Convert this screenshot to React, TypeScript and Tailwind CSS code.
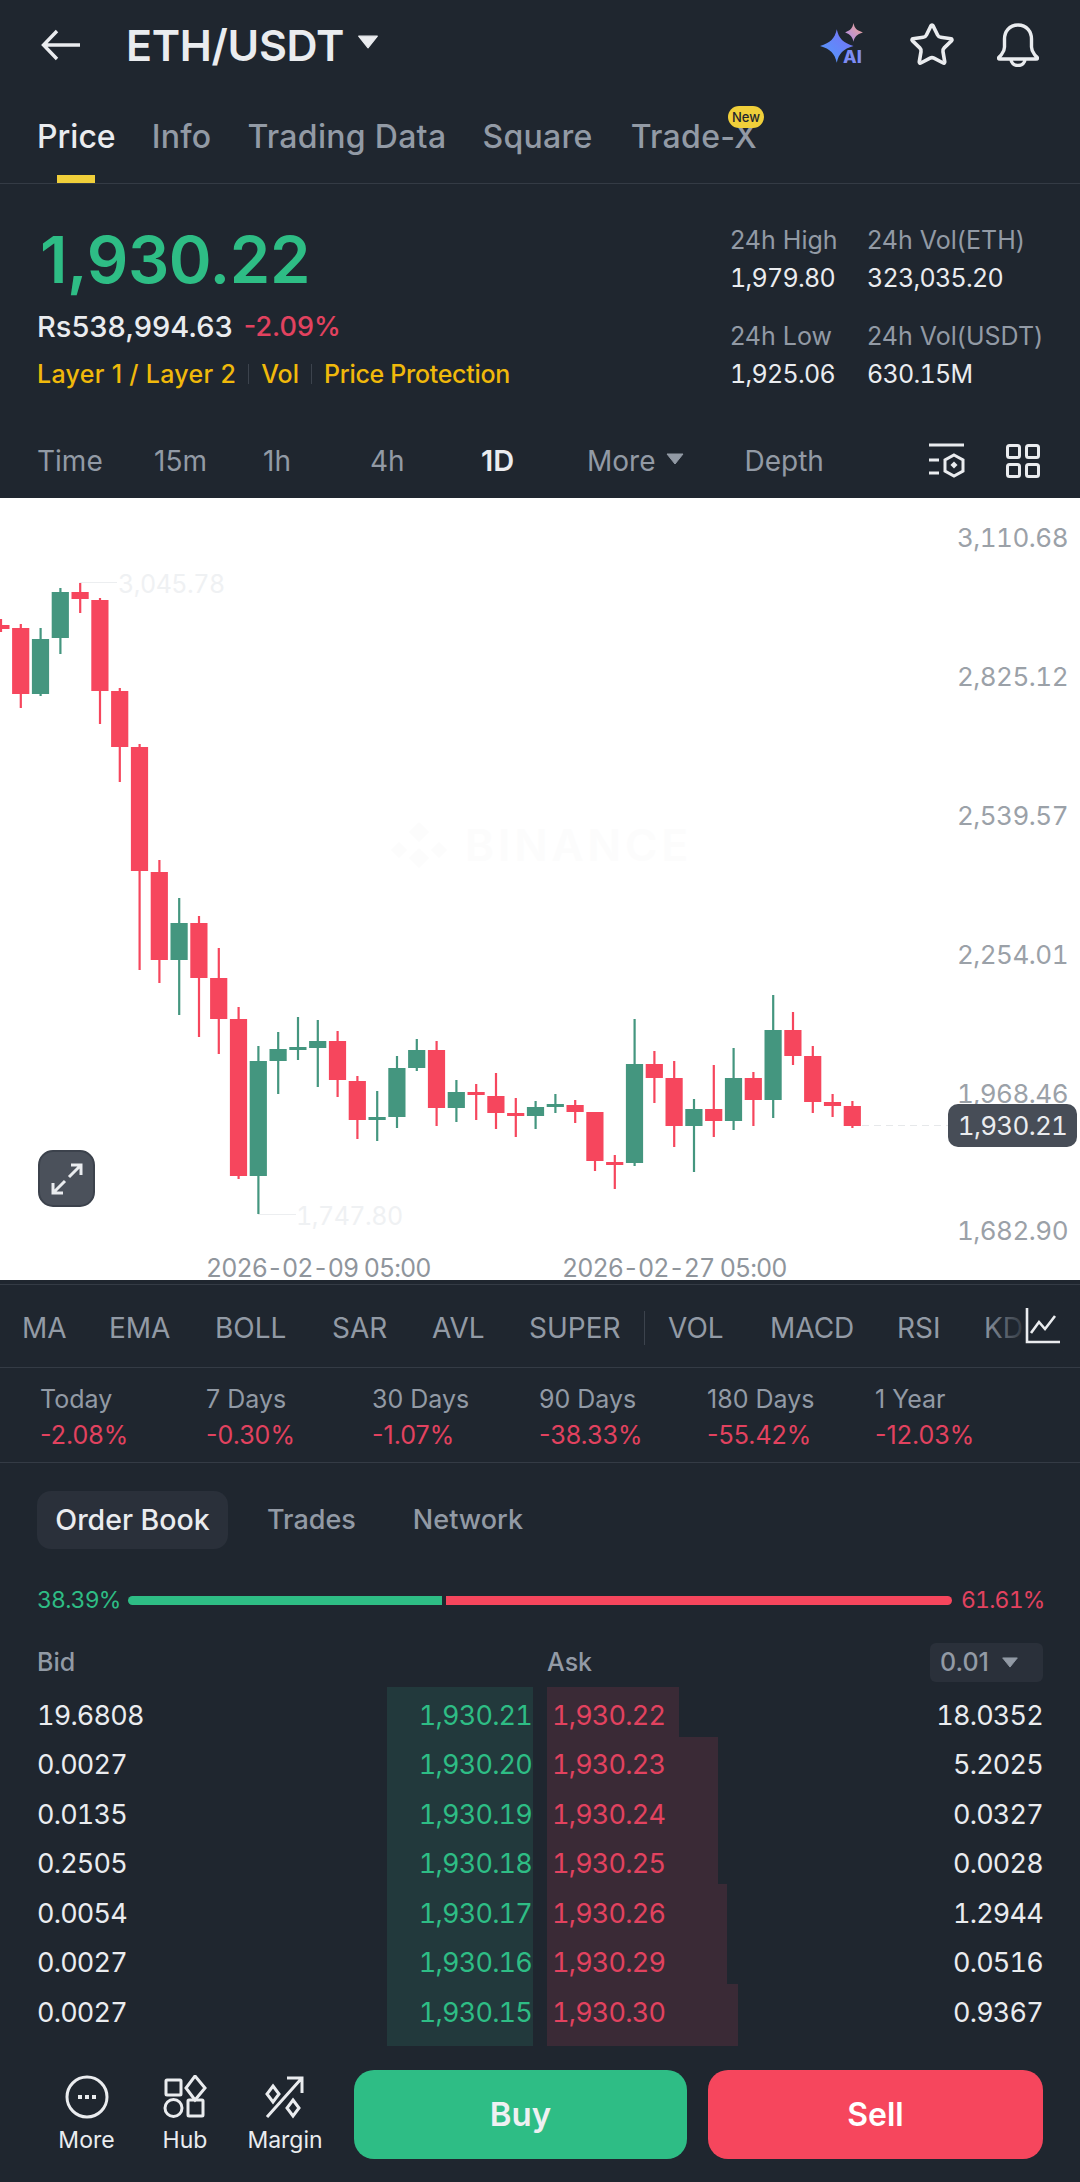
import { Star } from "lucide-react";

type Candle = [up: 0 | 1, wickTop: number, bodyTop: number, bodyBottom: number, wickBottom: number];

// page coordinates measured off the reference, oldest first
const candles: Candle[] = [
  [0, 619, 625, 629, 632], [0, 624, 628, 694, 708], [1, 628, 639, 694, 696], [1, 588, 592, 638, 654],
  [0, 583, 592, 599, 613], [0, 598, 600, 691, 724], [0, 688, 691, 747, 782], [0, 744, 747, 871, 970],
  [0, 860, 872, 960, 983], [1, 898, 923, 960, 1015], [0, 916, 923, 978, 1037], [0, 948, 978, 1019, 1054],
  [0, 1007, 1019, 1176, 1179], [1, 1046, 1061, 1176, 1214], [1, 1032, 1049, 1061, 1094], [1, 1017, 1047, 1049, 1060],
  [1, 1020, 1041, 1048, 1087], [0, 1031, 1041, 1080, 1097], [0, 1076, 1081, 1120, 1139], [1, 1091, 1117, 1120, 1141],
  [1, 1056, 1068, 1117, 1128], [1, 1039, 1050, 1068, 1071], [0, 1041, 1050, 1108, 1126], [1, 1080, 1092, 1108, 1122],
  [0, 1084, 1092, 1095, 1120], [0, 1073, 1096, 1113, 1129], [0, 1098, 1113, 1116, 1137], [1, 1101, 1107, 1116, 1129],
  [1, 1094, 1104, 1106, 1113], [0, 1100, 1105, 1112, 1123], [0, 1112, 1112, 1161, 1171], [0, 1155, 1162, 1163, 1189],
  [1, 1019, 1064, 1163, 1166], [0, 1051, 1064, 1078, 1103], [0, 1061, 1078, 1126, 1147], [1, 1099, 1109, 1126, 1172],
  [0, 1065, 1109, 1121, 1137], [1, 1048, 1078, 1121, 1130], [0, 1072, 1078, 1100, 1126], [1, 995, 1030, 1100, 1118],
  [0, 1012, 1030, 1056, 1065], [0, 1046, 1056, 1102, 1113], [0, 1094, 1102, 1106, 1117], [0, 1101, 1106, 1126, 1128],
];

const axisLabels: [string, number][] = [
  ["3,110.68", 537], ["2,825.12", 676], ["2,539.57", 815], ["2,254.01", 954], ["1,968.46", 1093], ["1,682.90", 1230],
];

const periods = [
  ["Today", "-2.08%", "w-[166px]"], ["7 Days", "-0.30%", "w-[166px]"], ["30 Days", "-1.07%", "w-[167px]"],
  ["90 Days", "-38.33%", "w-[168px]"], ["180 Days", "-55.42%", "w-[168px]"], ["1 Year", "-12.03%", "w-[150px]"],
];

const book = [
  ["19.6808", "1,930.21", "1,930.22", "18.0352"], ["0.0027", "1,930.20", "1,930.23", "5.2025"],
  ["0.0135", "1,930.19", "1,930.24", "0.0327"], ["0.2505", "1,930.18", "1,930.25", "0.0028"],
  ["0.0054", "1,930.17", "1,930.26", "1.2944"], ["0.0027", "1,930.16", "1,930.29", "0.0516"],
  ["0.0027", "1,930.15", "1,930.30", "0.9367"],
];

// ask depth steps: width, height
const askDepth = [[132, 50], [171, 147], [180, 100], [191, 62]];

function Caret({ className }: { className: string }) {
  return (
    <svg viewBox="0 0 18 12" className={className} fill="currentColor">
      <path d="M1 1h16L9 11z" strokeLinejoin="round" stroke="currentColor" />
    </svg>
  );
}

function AiIcon() {
  return (
    <svg viewBox="0 0 44 42" className="h-[44px] w-[46px]">
      <defs>
        <linearGradient id="big" x1="0" y1="1" x2="1" y2="0">
          <stop offset="0" stopColor="#4f9dfb" />
          <stop offset="1" stopColor="#7a6ef5" />
        </linearGradient>
        <linearGradient id="small" x1="0" y1="1" x2="1" y2="0">
          <stop offset="0" stopColor="#a98bf2" />
          <stop offset="1" stopColor="#f0a58c" />
        </linearGradient>
      </defs>
      <path d="M17 6c2 9 6 13 16 16-10 3-14 7-16 16C15 29 11 25 1 22 11 19 15 15 17 6z" fill="url(#big)" />
      <path d="M33 0c1 5 3 7 9 9-6 2-8 4-9 9-1-5-3-7-8-9 5-2 7-4 8-9z" fill="url(#small)" />
      <text x="23" y="38" fontSize="17" fontWeight="800" fill="#7d8cf4" fontFamily="Inter, sans-serif">AI</text>
    </svg>
  );
}

function Bell() {
  return (
    <svg viewBox="0 0 42 44" className="h-[44px] w-[42px]" fill="none" stroke="#eaecef" strokeWidth="3.4" strokeLinejoin="round">
      <path d="M21 2C12 2 7.500 9 7.500 16v8c0 3-1 5-3 7.500-1.500 2-3 3-3 3.500 0 .5.5 1 1.500 1h36c1 0 1.500-.5 1.500-1 0-.5-1.500-1.500-3-3.500-2-2.500-3-4.500-3-7.500v-8C34.500 9 30 2 21 2z" />
      <path d="M14 36c0 4 3 6.500 7 6.500s7-2.500 7-6.500" />
    </svg>
  );
}

function Chart() {
  return (
    <div className="relative h-[782px] overflow-hidden bg-white">
      <svg viewBox="0 498 1080 782" className="absolute inset-0 h-[782px] w-[1080px]">
        <path d="M419 822l10 10-10 10-10-10zM419 848l10 10-10 10-10-10zM399 842l8 8-8 8-8-8zM439 842l8 8-8 8-8-8z" fill="#fcfcfc" />
        <text x="465" y="861" fontSize="44" fontWeight="600" letterSpacing="4" fill="#fcfcfc">BINANCE</text>
        <path d="M79.500 582.500H117M258 1214.500h38" stroke="#eceef0" />
        <path d="M862 1125.500h86" stroke="#e6e8ea" strokeDasharray="7 5" />
        {candles.map(([up, wickTop, bodyTop, bodyBottom, wickBottom], i) => {
          const x = 0.9 + 19.8 * i;
          const fill = up ? "#44967f" : "#f6465d";
          return (
            <g key={i} fill={fill}>
              <rect x={x - 1} y={wickTop} width="2.200" height={wickBottom - wickTop} />
              <rect x={x - 8.600} y={bodyTop} width="17.200" height={Math.max(bodyBottom - bodyTop, 3)} />
            </g>
          );
        })}
        <g fontSize="26" letterSpacing="-0.500" fontFamily="Inter, sans-serif" className="tabular-nums">
          <text x="118" y="593" fontSize="25" fill="#eff1f3">3,045.78</text>
          <text x="296" y="1225" fontSize="25" fill="#eff1f3">1,747.80</text>
          {axisLabels.map(([label, y]) => (
            <text key={label} x="1068" y={y + 10} textAnchor="end" fill="#9ba1a8">{label}</text>
          ))}
          <text x="206" y="1277" fontSize="25" letterSpacing="-1" fill="#8f959c">2026-02-09 05:00</text>
          <text x="562" y="1277" fontSize="25" letterSpacing="-1" fill="#8f959c">2026-02-27 05:00</text>
        </g>
      </svg>
      <div className="absolute right-[3px] top-[606px] flex h-[43px] w-[129px] items-center justify-center rounded-[10px] bg-[#474d57] text-[26px] tabular-nums tracking-[-0.7px] text-[#eaecef]">
        1,930.21
      </div>
      <div className="absolute left-[38px] top-[652px] flex h-[57px] w-[57px] items-center justify-center rounded-[15px] border-2 border-[#3c424c] bg-[#4b515b]">
        <svg viewBox="0 0 36 36" className="h-[36px] w-[36px]" fill="none" stroke="#eaecef" strokeWidth="3">
          <path d="M22 4h10v10M32 4L20 16M14 32H4V22M4 32l12-12" />
        </svg>
      </div>
    </div>
  );
}

export default function App() {
  return (
    <div className="flex h-[2182px] w-[1080px] flex-col overflow-hidden bg-[#1f262f] font-['Inter',sans-serif] text-[#eaecef]">
      <header className="flex h-[90px] items-center pl-[41px] pr-[40px]">
        <svg viewBox="0 0 40 32" className="h-[32px] w-[40px]" fill="none" stroke="#eaecef" strokeWidth="3.400">
          <path d="M39 16H3M16 2L2.500 16 16 30" />
        </svg>
        <h1 className="ml-[45px] text-[43px] font-semibold leading-none tracking-[-0.3px]">ETH/USDT</h1>
        <Caret className="ml-[13px] mb-[6px] h-[14px] w-[22px] text-[#eaecef]" />
        <div className="ml-auto flex items-center">
          <AiIcon />
          <Star className="ml-[43px] h-[48px] w-[48px]" strokeWidth={1.800} color="#eaecef" />
          <div className="ml-[41px] mr-[1px]"><Bell /></div>
        </div>
      </header>

      <nav className="flex h-[94px] items-center border-b border-[#343b45] pl-[37px] text-[32px] font-medium tracking-[0.3px] text-[#929aa5]">
        <div className="relative flex h-full items-center tracking-normal text-[#eaecef]">
          Price
          <span className="absolute bottom-0 left-[20px] h-[8px] w-[38px] bg-[#f0cf3a]" />
        </div>
        <span className="ml-[36px]">Info</span>
        <span className="ml-[36px]">Trading Data</span>
        <span className="ml-[36px]">Square</span>
        <div className="relative ml-[38px]">
          Trade-X
          <span className="absolute right-[-7px] top-[-7px] rounded-full bg-[#f0cf3a] px-[4px] text-[13px] font-medium leading-[22px] tracking-normal text-[#1f262f]">New</span>
        </div>
      </nav>

      <section className="flex h-[240px] pl-[37px]">
        <div className="flex w-[693px] flex-col">
          <div className="mt-[36px] ml-[3px] text-[65px] font-semibold leading-[80px] tracking-[-0.4px] text-[#2ebd85]">1,930.22</div>
          <div className="mt-[7px] flex items-center text-[29px] font-medium leading-[40px]">
            Rs538,994.63
            <span className="ml-[11px] text-[27px] text-[#e2425f]">-2.09%</span>
          </div>
          <div className="mt-[7px] flex items-center text-[25px] font-medium leading-[40px] text-[#f0b90b]">
            <span className="tracking-[0.3px]">Layer 1 / Layer 2</span>
            <span className="mx-[12px] h-[20px] w-px bg-[#3c434d]" />
            <span>Vol</span>
            <span className="mx-[12px] h-[20px] w-px bg-[#3c434d]" />
            <span className="tracking-[-0.3px]">Price Protection</span>
          </div>
        </div>
        <div className="mt-[37px] grid grid-cols-[137px_1fr] grid-rows-[38px_58px_38px_38px] text-[25px] leading-[38px] text-[#929aa5]">
          <span>24h High</span>
          <span>24h Vol(ETH)</span>
          <span className="tabular-nums tracking-[-0.7px] text-[#eaecef]">1,979.80</span>
          <span className="tabular-nums tracking-[-0.7px] text-[#eaecef]">323,035.20</span>
          <span>24h Low</span>
          <span>24h Vol(USDT)</span>
          <span className="tabular-nums tracking-[-0.7px] text-[#eaecef]">1,925.06</span>
          <span className="tabular-nums tracking-[-0.7px] text-[#eaecef]">630.15M</span>
        </div>
      </section>

      <div className="flex h-[74px] items-center pl-[37px] text-[28px] text-[#929aa5]">
        <span className="w-[117px]">Time</span>
        <span className="w-[109px]">15m</span>
        <span className="w-[107px]">1h</span>
        <span className="w-[111px]">4h</span>
        <span className="w-[106px] text-[29px] font-semibold text-[#eaecef]">1D</span>
        <span>More</span>
        <Caret className="ml-[11px] mb-[5px] h-[12px] w-[18px]" />
        <span className="ml-[60px]">Depth</span>
        <svg viewBox="0 0 36 36" className="ml-[105px] h-[36px] w-[36px]" fill="none" stroke="#eaecef" strokeWidth="3">
          <path d="M0 2h35M0 17h10M0 30h10M25 12l9 5v11l-9 5-9-5V17z" />
          <rect x="22.500" y="19.500" width="5" height="5" fill="#eaecef" stroke="none" transform="rotate(45 25 22)" />
        </svg>
        <svg viewBox="0 0 34 34" className="ml-[41px] h-[34px] w-[34px]" fill="none" stroke="#eaecef" strokeWidth="3">
          <rect x="1.500" y="1.500" width="12" height="12" rx="2" />
          <rect x="20.500" y="1.500" width="12" height="12" rx="2" />
          <rect x="1.500" y="20.500" width="12" height="12" rx="2" />
          <rect x="20.500" y="20.500" width="12" height="12" rx="2" />
        </svg>
      </div>

      <Chart />

      <div className="flex h-[88px] flex-col justify-end border-b border-[#343b45]">
        <div className="relative flex h-[83px] items-center overflow-hidden border-t border-[#343b45] pl-[22px] pt-[3px] text-[28px] text-[#929aa5]">
          <span className="w-[87px]">MA</span>
          <span className="w-[106px]">EMA</span>
          <span className="w-[117px]">BOLL</span>
          <span className="w-[100px]">SAR</span>
          <span className="w-[97px]">AVL</span>
          <span className="w-[115px]">SUPER</span>
          <span className="mr-[23px] h-[34px] w-px bg-[#3c434d]" />
          <span className="w-[102px]">VOL</span>
          <span className="w-[127px]">MACD</span>
          <span className="w-[87px]">RSI</span>
          <span>KD</span>
          <div className="absolute right-0 top-0 flex h-full w-[98px] items-center justify-end bg-gradient-to-r from-transparent via-[#1f262f] to-[#1f262f] pr-[19px]">
            <svg viewBox="0 0 36 36" className="h-[36px] w-[36px]" fill="none" stroke="#eaecef" strokeWidth="2.600">
              <path d="M2 0v34h33M6 25l8-11 6 7 10-13" />
            </svg>
          </div>
        </div>
      </div>

      <div className="flex h-[95px] border-b border-[#343b45] pl-[40px] pt-[13px] text-[25px] leading-[36px]">
        {periods.map(([label, value, width]) => (
          <div key={label} className={width}>
            <div className="text-[#929aa5]">{label}</div>
            <div className="text-[#e2425f]">{value}</div>
          </div>
        ))}
      </div>

      <div className="mt-[28px] flex items-center pl-[37px] text-[27px] font-medium text-[#929aa5]">
        <span className="flex h-[58px] w-[191px] items-center justify-center rounded-[14px] bg-[#2a303a] text-[28.500px] text-[#eaecef]">Order Book</span>
        <span className="ml-[39px]">Trades</span>
        <span className="ml-[57px]">Network</span>
      </div>

      <div className="mt-[29px] flex h-[44px] items-center pl-[37px] text-[23px] tabular-nums tracking-[-0.8px]">
        <span className="w-[91px] text-[#2ebd85]">38.39%</span>
        <span className="h-[9px] w-[314px] rounded-l-full bg-[#2ebd85]" />
        <span className="ml-[4px] h-[9px] w-[506px] rounded-r-full bg-[#f6465d]" />
        <span className="ml-[9px] text-[#e2425f]">61.61%</span>
      </div>

      <div className="mt-[21px] flex h-[39px] items-center pl-[37px] pr-[37px] text-[25px] font-medium text-[#929aa5]">
        <span className="w-[510px]">Bid</span>
        <span>Ask</span>
        <span className="ml-auto flex h-[39px] w-[113px] items-center rounded-[6px] bg-[#2a303a] pl-[10px]">
          0.01
          <Caret className="ml-[12px] h-[11px] w-[18px]" />
        </span>
      </div>

      <div className="relative mt-[5px] flex h-[359px] flex-col pb-[8px] pt-[4px] text-[27px] tabular-nums tracking-[-0.8px]">
        <span className="absolute inset-y-0 left-[387px] w-[146px] bg-[#22393c]" />
        <div className="absolute left-[547px] top-0 flex flex-col">
          {askDepth.map(([width, height]) => (
            <span key={height} className="block bg-[#3a2a36]" style={{ width, height }} />
          ))}
        </div>
        {book.map(([bid, buy, sell, ask]) => (
          <div key={buy} className="relative flex flex-1 items-center pl-[37px] pr-[37px]">
            <span className="w-[350px]">{bid}</span>
            <span className="w-[145px] text-right text-[#2ebd85]">{buy}</span>
            <span className="ml-[20px] text-[#e2425f]">{sell}</span>
            <span className="ml-auto">{ask}</span>
          </div>
        ))}
      </div>

      <footer className="mt-auto mb-[23px] flex h-[89px] items-center pl-[38px] pr-[37px]">
        <div className="flex w-[316px] text-center text-[23px] leading-[30px]">
          <div className="flex w-[97px] flex-col items-center">
            <svg viewBox="0 0 44 44" className="h-[44px] w-[44px]" fill="none" stroke="#eaecef" strokeWidth="3">
              <circle cx="22" cy="22" r="20" />
              <path d="M13 22h4M20 22h4M27 22h4" strokeWidth="4" />
            </svg>
            <span className="mt-[6px]">More</span>
          </div>
          <div className="flex w-[100px] flex-col items-center">
            <svg viewBox="0 0 44 44" className="h-[44px] w-[44px]" fill="none" stroke="#eaecef" strokeWidth="3">
              <rect x="3" y="5" width="15" height="15" rx="1" />
              <path d="M32 1l10 12-10 12-9-12z" />
              <circle cx="10.500" cy="33" r="8.500" />
              <rect x="25" y="25" width="15" height="16" rx="1" />
            </svg>
            <span className="mt-[6px]">Hub</span>
          </div>
          <div className="flex w-[100px] flex-col items-center">
            <svg viewBox="0 0 44 44" className="h-[44px] w-[44px]" fill="none" stroke="#eaecef" strokeWidth="3">
              <path d="M4 42L38 4M24 3h15v15M10 11l6 8-6 8-6-8zM30 25l6 8-6 8-6-8z" />
            </svg>
            <span className="mt-[6px]">Margin</span>
          </div>
        </div>
        <button className="h-full w-[333px] rounded-[20px] bg-[#2ebd85] pt-[1px] text-[33px] font-semibold text-[#eef0f2]">Buy</button>
        <button className="ml-[21px] h-full w-[335px] rounded-[20px] bg-[#f6465d] pt-[1px] text-[32px] font-semibold text-white">Sell</button>
      </footer>
    </div>
  );
}
